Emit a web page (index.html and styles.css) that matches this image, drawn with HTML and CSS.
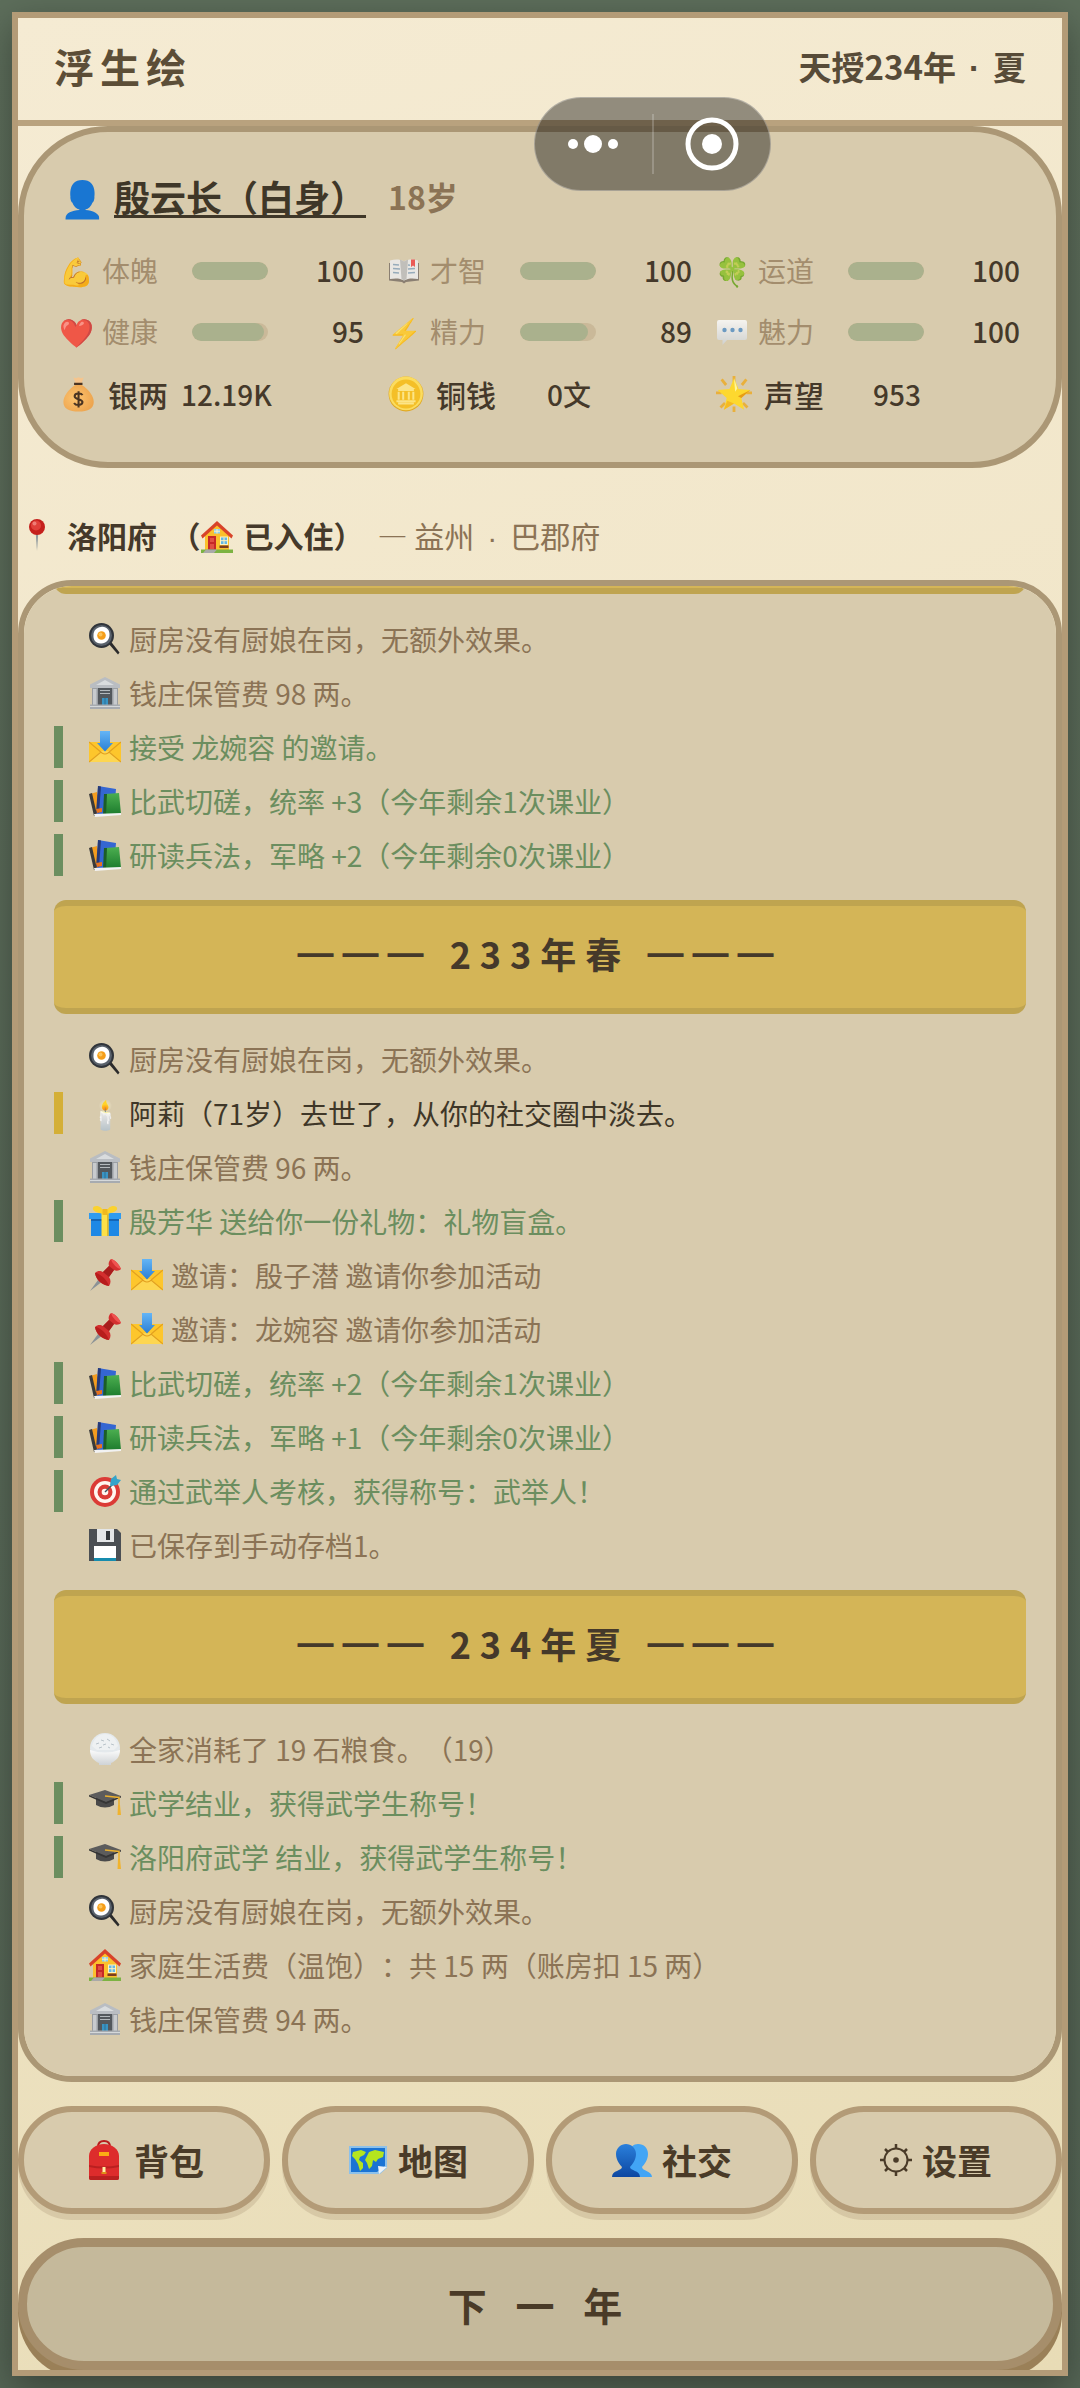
FILE: index.html
```html
<!DOCTYPE html>
<html lang="zh-CN">
<head>
    <meta charset="UTF-8">
    <meta name="viewport" content="width=device-width, initial-scale=1.0">
    <title>浮生绘</title>
    <link rel="stylesheet" href="styles.css">
</head>
<body>
    <!-- shared icons -->
    <svg class="sprite" aria-hidden="true">
        <defs>
            <linearGradient id="gBlue" x1="0" y1="0" x2="0" y2="1"><stop offset="0" stop-color="#2a80dc"/><stop offset="1" stop-color="#0d47a1"/></linearGradient>
            <linearGradient id="gSky" x1="0" y1="0" x2="0" y2="1"><stop offset="0" stop-color="#64b5f6"/><stop offset="1" stop-color="#2a7fd4"/></linearGradient>
            <linearGradient id="gWhite" x1="0" y1="0" x2="0" y2="1"><stop offset="0" stop-color="#fbfbfb"/><stop offset="1" stop-color="#cfd3d6"/></linearGradient>
            <linearGradient id="gGreen" x1="0" y1="0" x2="0" y2="1"><stop offset="0" stop-color="#4caf50"/><stop offset="1" stop-color="#1b7a2c"/></linearGradient>
            <radialGradient id="gMoney" cx=".4" cy=".5" r=".6"><stop offset="0" stop-color="#fdc470"/><stop offset="1" stop-color="#eda54f"/></radialGradient>
        </defs>
        <symbol id="book" viewBox="0 0 32 32">
            <path d="M1 8v17.500l13 1.500 2 1.500 2-1.500 13-1.500V8z" fill="#7d7268"/>
            <path d="M2 5.500C7 4 12 4 16 6.500 20 4 25 4 30 5.500V24c-5-1-10-1-14 1.500C12 23 7 23 2 24z" fill="#ededed"/>
            <path d="M16 6.500c-2-1.300-3-1.500-4-1.800L13.500 24l2.500 1.500L18.500 24 20 4.700c-1 .3-2 .5-4 1.800z" fill="#bdbdbd"/>
            <path d="M23 4.500h4V12l-2-1.500L23 12z" fill="#ef4848"/>
            <path d="M5 9.500l6 .5M5 13.500l7 .5M5 17.500l6 .5M20 10l2 .2M20 14l7-.5M20 18l7-.5" stroke="#8ba6bd" stroke-width="1.500"/>
        </symbol>
        <symbol id="chat" viewBox="0 0 32 32">
            <path d="M3 4h26q2 0 2 2v16q0 2-2 2H11l-4.500 5V24H3q-2 0-2-2V6q0-2 2-2z" fill="url(#gWhite)"/>
            <circle cx="8.500" cy="14" r="2.200" fill="#5a92c6"/><circle cx="16.500" cy="14" r="2.200" fill="#5a92c6"/><circle cx="24.500" cy="14" r="2.200" fill="#5a92c6"/>
        </symbol>
        <symbol id="money" viewBox="0 0 32 32">
            <path d="M12 1l2 1 2.500-1 2.500 1 2-1-2 6h-5z" fill="#f6c58d"/>
            <path d="M13.500 8h6c6 4 10.500 10 10.500 15 0 6-5 8.500-13.500 8.500S3 29 3 23c0-5 4.500-11 10.500-15z" fill="url(#gMoney)"/>
            <path d="M12.500 7h7.500" stroke="#4a3422" stroke-width="2"/>
            <path d="M20 17c-1-2-7-2.200-7 1 0 3.200 7 2 7 5.200 0 3.300-6 3.300-7.500.8M16.500 13.500v14.500" fill="none" stroke="#4a3422" stroke-width="1.800"/>
        </symbol>
        <symbol id="coin" viewBox="0 0 32 32">
            <circle cx="16" cy="16" r="15.500" fill="#e0a820"/><circle cx="16" cy="15.500" r="15" fill="#fbdc5f"/><circle cx="16" cy="16" r="12.800" fill="#f4bf27"/>
            <path d="M16 6.500l8.500 5h-17z" fill="#fce588"/>
            <path d="M9 12.500h14M9.500 14v7M13.500 14v7M18.500 14v7M22.500 14v7M7.500 22.500h17M9 24.500h14" stroke="#fce588" stroke-width="1.800"/>
        </symbol>
        <symbol id="star" viewBox="0 0 32 32">
            <path d="M16 0v5M16 27v5M0 15h5M27 15h5M5 3l4 5M27 3l-4 5M4 28l4-4M28 28l-4-4" stroke="#e9b03c" stroke-width="2.500"/>
            <path d="M16 2l4 9.500 10.500 1-8 7 2.500 10.500-9-5.500L7 30l2.500-10.500-8-7 10.500-1z" fill="#fdd82f"/>
            <path d="M16 2l3 9-2 3z" fill="#fff59a"/><path d="M30.500 12.500l-8 7-3-1.500z" fill="#e79c16"/><path d="M16 24.500L7 30l3-8z" fill="#f5b921"/>
        </symbol>
        <symbol id="pin" viewBox="0 0 32 32">
            <path d="M14.700 14h2.600L16 32z" fill="#8f999d"/><circle cx="16" cy="8" r="8" fill="#c5201c"/><circle cx="15" cy="6.500" r="5" fill="#e0403a"/><circle cx="13.500" cy="4.500" r="2" fill="#ef7d76"/>
        </symbol>
        <symbol id="house" viewBox="0 0 32 32">
            <path d="M4 14L16 3l12 11v15H4z" fill="#fbc02d"/>
            <path d="M16 0L0 14.500l1.500 3L16 4.500l14.500 13 1.500-3z" fill="#d8432a"/>
            <path d="M7 15h8v15H7z" fill="#c62828"/><path d="M9 17h4v4H9zM9 23h4v5H9z" fill="#e04f43"/>
            <path d="M19 15.500h8V24h-8z" fill="#fff3c0"/><path d="M20 16.500h6V23h-6z" fill="#62b8e8"/><path d="M23 16.500V23M20 19.700h6" stroke="#fff3c0"/>
            <path d="M13 8h6v4.500h-6z" fill="#8bd0f2"/><path d="M16 8v4.500M13 10.200h6" stroke="#fff3c0"/>
            <path d="M18.500 24.500h9V27h-9z" fill="#7b3b1e"/><path d="M0 28.500h32V32H0z" fill="#7cb342"/><path d="M5 28.500h11L13 32H2z" fill="#a9a9a9"/>
        </symbol>
        <symbol id="pan" viewBox="0 0 32 32">
            <path d="M19 20l2.500-2 9 11.500-1.500 2z" fill="#2b2b2b"/>
            <circle cx="12.500" cy="12.500" r="12.500" fill="#30343a"/><circle cx="12.500" cy="12.500" r="10.500" fill="#59616b"/>
            <path d="M12 4c5-1 9 3 8.500 8 0 5-3.500 8-8 8.500C7 21 4 17 4.500 12 4.500 8 7 4.500 12 4z" fill="#fff"/><circle cx="12.500" cy="12.500" r="4.300" fill="#f59e19"/><circle cx="11.500" cy="11.500" r="2" fill="#fbc35a"/>
        </symbol>
        <symbol id="bank" viewBox="0 0 32 32">
            <path d="M16 0l15 7.500V11H1V7.500z" fill="#b9bdc2"/><path d="M16 3l9 5H7z" fill="#d9dcde"/>
            <path d="M3 11h26v17H3z" fill="#9b9fa4"/><path d="M4 12h3.500v16H4zM24.500 12H28v16h-3.500z" fill="#c8cbce"/>
            <path d="M9 11h14v17H9z" fill="#53585d"/><path d="M11 13.500h10M11 16.500h10" stroke="#b4b9bd" stroke-width="1.200"/>
            <path d="M13 21h6v7h-6z" fill="#3a94c4"/><path d="M16 21v7" stroke="#2d6f95"/>
            <path d="M1 27.500h30V32H1z" fill="#a7abb0"/><path d="M1 29.500h30" stroke="#d5d8da"/>
        </symbol>
        <symbol id="mail" viewBox="0 0 32 32">
            <path d="M0 11h32v20H0z" fill="#fdc62c"/><path d="M0 31l12-11h8l12 11z" fill="#fdd651"/><path d="M0 11l13 11q3 2 6 0l13-11M0 31l12-10M32 31L20 21" fill="none" stroke="#e2a01f" stroke-width="1.200"/>
            <path d="M11 0h10v12h3L16 20.500 8 12h3z" fill="url(#gSky)"/>
        </symbol>
        <symbol id="books" viewBox="0 0 32 32">
            <path d="M1 9l7-2 5 22-6 2z" fill="#f39c1f"/><path d="M0 9l3-1 5 22-3 1z" fill="#3a3a3a"/>
            <path d="M9 1l18 3-2 25H8z" fill="#3466d2"/><path d="M9 1l3 .5L10 28H7z" fill="#263a78"/>
            <path d="M16 9l14-1 2 21-16 1z" fill="url(#gGreen)"/><path d="M15 9h3l-1 21h-3z" fill="#1c5e28"/>
            <path d="M5 29l27-1v2l-26 2z" fill="#f2f2f2"/><path d="M7 24l6-1v4l-5 1z" fill="#e9731c"/>
        </symbol>
        <symbol id="gift" viewBox="0 0 32 32">
            <path d="M2 10h28v21H2z" fill="#1e88e5"/><path d="M0 8h32v6H0z" fill="#2f9bf0"/><path d="M2 14h28v2H2z" fill="#1565b5"/>
            <path d="M12.500 8h7v23h-7z" fill="#fde047"/><path d="M18 8h1.500v23H18z" fill="#e0b82a"/>
            <path d="M15 7C12 0 5 0 4 3s4 5 11 6M17 7c3-7 10-7 11-4s-4 5-11 6" fill="#fbd22f"/><path d="M13.500 4h5v6h-5z" fill="#f0b91e"/>
        </symbol>
        <symbol id="pushpin" viewBox="0 0 32 32">
            <path d="M9 21l3 2.500L1 32z" fill="#8b9296"/>
            <path d="M6 14c3-3 6-2 8-1l6-6c-1-3 0-5 2-7 4 1 8 5 10 10-2 2-5 2-7 1l-5 7c2 3 2 6 0 9C13 26 7 21 6 14z" fill="#d32f2f"/>
            <path d="M14 13l6-6 5 4-5 7z" fill="#a81d1d"/><path d="M22 0c4 1 8 5 10 10-3 0-9-5-10-10z" fill="#ef5350"/><path d="M6 14c3-1 12 6 14 13-7-1-13-6-14-13z" fill="#b71c1c"/>
        </symbol>
        <symbol id="target" viewBox="0 0 32 32">
            <circle cx="16" cy="17" r="15" fill="#db3b36"/><circle cx="16" cy="17" r="11" fill="#fff6f0"/><circle cx="16" cy="17" r="7.500" fill="#db3b36"/><circle cx="16" cy="17" r="3.300" fill="#fff6f0"/>
            <path d="M16 17L27 6" stroke="#3c5661" stroke-width="1.500"/><path d="M21 10l1-6 5-4 1 4 4 1-4 5-6 1z" fill="#35a3c9"/>
        </symbol>
        <symbol id="disk" viewBox="0 0 32 32">
            <path d="M0 0h28l4 4v28H0z" fill="#4b4f54"/><path d="M8 0h17v13H8z" fill="#e4e6e8"/><path d="M17 2h4v9h-4z" fill="#33373b"/>
            <path d="M5 17h22v15H5z" fill="#fff"/><path d="M5 29h22v3H5z" fill="#168cae"/>
        </symbol>
        <symbol id="rice" viewBox="0 0 32 32">
            <circle cx="16" cy="15" r="15" fill="#e4e9ec"/><path d="M3 13C5 5 10 1 16 1s11 4 13 12l-4 4H8z" fill="#eef1f2"/>
            <path d="M7 11l3-1M12 7l3 1M18 6l3 2M22 11l3 1M14 12l3-1M10 15l3-1M19 14l2 1" stroke="#b9c3c9"/>
            <path d="M1 17q15 5 30 0c0 7-4 11-9 13v2H10v-2C5 28 1 24 1 17z" fill="url(#gWhite)"/>
        </symbol>
        <symbol id="cap" viewBox="0 0 32 32">
            <path d="M7 10v8q9 5 18 0v-8z" fill="#4a4a4a"/><path d="M0 8l16-5 16 6-15 6z" fill="#5c5c5c"/><path d="M0 8l17 7 15-6v1.500L17 17 0 9.500z" fill="#353535"/>
            <path d="M16 9l14 1.500V22" fill="none" stroke="#eab02e" stroke-width="1.600"/><path d="M29 18h2l1 10h-3.500z" fill="#f0b32e"/>
        </symbol>
        <symbol id="bag" viewBox="0 0 40 40">
            <path d="M14 7q0-6 6-6t6 6" fill="none" stroke="#b71c1c" stroke-width="2"/>
            <path d="M5 16C5 9 12 4 20 4s15 5 15 12v22q0 2-2 2H7q-2 0-2-2z" fill="#dd2c2c"/>
            <path d="M5 25q15 3 30 0v2q-15 3-30 0zM5 36h30v2q0 2-2 2H7q-2 0-2-2z" fill="#b92020"/>
            <path d="M15 12h10v4H15z" fill="#fbab14"/><path d="M18.500 27h3v6h-3z" fill="#fff0a3"/><path d="M17.500 32h5v2h-5z" fill="#e08f18"/>
        </symbol>
        <symbol id="map" viewBox="0 0 40 40">
            <path d="M1 6h38v22l-7 6H1z" fill="#8dc1ea"/><path d="M3 8h34v18l-8 6H3z" fill="#1b74d4"/>
            <path d="M5 12l8-2 5 2-2 3-4 2-1 3 4 3v5l-3 3-2-7-3-5-3-3zM21 12l6-2 9 2-1 5-5 2-2 3-3-2-1 6-3 3-2-6-2-3z" fill="#b4e51e"/>
            <path d="M39 27l-9-1 1 8z" fill="#edf3f8"/>
        </symbol>
        <symbol id="people" viewBox="0 0 40 40">
            <path d="M17 15c0-8 5-11 9-11 6 0 10 4 10 10s-4 11-6 13c0 4 10 4 10 10H14z" fill="#42a5f5"/>
            <path d="M4 14C4 8 9 4 14 4s10 4 10 10-4 11-6 13c0 4 10 3 10 10H0c0-7 10-6 10-10-2-2-6-7-6-13z" fill="url(#gBlue)"/>
        </symbol>
        <symbol id="gear" viewBox="0 0 32 32">
            <circle cx="16" cy="16" r="11.500" fill="none" stroke="currentColor" stroke-width="2"/><circle cx="16" cy="16" r="2.800" fill="currentColor"/>
            <path d="M16 0v5M16 27v5M0 16h5M27 16h5M5 5l3 3M24 24l3 3M27 5l-3 3M8 24l-3 3" stroke="currentColor" stroke-width="2.500"/>
        </symbol>
    </svg>

    <div class="frame">
        <header class="top-bar">
            <h1 class="title">浮生绘</h1>
            <span class="date">天授234年<span class="dot">·</span>夏</span>
        </header>

        <section class="profile">
            <div class="name-row">
                <span class="avatar">👤</span>
                <a class="name" href="#">殷云长（白身）</a>
                <span class="age">18岁</span>
            </div>
            <div class="stats">
                <div class="stat"><span class="emoji">💪</span><span class="label">体魄</span><div class="bar"><div class="fill" style="width: 100%"></div></div><span class="value">100</span></div>
                <div class="stat"><svg class="icon"><use href="#book"/></svg><span class="label">才智</span><div class="bar"><div class="fill" style="width: 100%"></div></div><span class="value">100</span></div>
                <div class="stat"><span class="emoji">🍀</span><span class="label">运道</span><div class="bar"><div class="fill" style="width: 100%"></div></div><span class="value">100</span></div>
                <div class="stat"><span class="emoji">❤️</span><span class="label">健康</span><div class="bar"><div class="fill" style="width: 95%"></div></div><span class="value">95</span></div>
                <div class="stat"><span class="emoji">⚡</span><span class="label">精力</span><div class="bar"><div class="fill" style="width: 89%"></div></div><span class="value">89</span></div>
                <div class="stat"><svg class="icon"><use href="#chat"/></svg><span class="label">魅力</span><div class="bar"><div class="fill" style="width: 100%"></div></div><span class="value">100</span></div>
                <div class="money"><svg class="icon"><use href="#money"/></svg><span>银两</span><span class="amount long">12.19K</span></div>
                <div class="money"><svg class="icon"><use href="#coin"/></svg><span>铜钱</span><span class="amount">0文</span></div>
                <div class="money"><svg class="icon"><use href="#star"/></svg><span>声望</span><span class="amount">953</span></div>
            </div>
        </section>

        <div class="location">
            <svg class="icon"><use href="#pin"/></svg>
            <span class="place">洛阳府&nbsp; （<svg class="icon"><use href="#house"/></svg> 已入住）</span>
            <span class="region">— 益州<span class="dot">·</span>巴郡府</span>
        </div>

        <main class="log">
            <div class="entries">
                <div class="season"></div>
                <p class="entry"><svg class="icon"><use href="#pan"/></svg>厨房没有厨娘在岗，无额外效果。</p>
                <p class="entry"><svg class="icon"><use href="#bank"/></svg>钱庄保管费 98 两。</p>
                <p class="entry good"><svg class="icon"><use href="#mail"/></svg>接受 龙婉容 的邀请。</p>
                <p class="entry good"><svg class="icon"><use href="#books"/></svg>比武切磋，统率 +3（今年剩余1次课业）</p>
                <p class="entry good"><svg class="icon"><use href="#books"/></svg>研读兵法，军略 +2（今年剩余0次课业）</p>

                <h2 class="season"><span class="dash">———</span> 233年春 <span class="dash">———</span></h2>
                <p class="entry"><svg class="icon"><use href="#pan"/></svg>厨房没有厨娘在岗，无额外效果。</p>
                <p class="entry event"><span class="emoji">🕯️</span>阿莉（71岁）去世了，从你的社交圈中淡去。</p>
                <p class="entry"><svg class="icon"><use href="#bank"/></svg>钱庄保管费 96 两。</p>
                <p class="entry good"><svg class="icon"><use href="#gift"/></svg>殷芳华 送给你一份礼物：礼物盲盒。</p>
                <p class="entry"><svg class="icon"><use href="#pushpin"/></svg><svg class="icon"><use href="#mail"/></svg>邀请：殷子潜 邀请你参加活动</p>
                <p class="entry"><svg class="icon"><use href="#pushpin"/></svg><svg class="icon"><use href="#mail"/></svg>邀请：龙婉容 邀请你参加活动</p>
                <p class="entry good"><svg class="icon"><use href="#books"/></svg>比武切磋，统率 +2（今年剩余1次课业）</p>
                <p class="entry good"><svg class="icon"><use href="#books"/></svg>研读兵法，军略 +1（今年剩余0次课业）</p>
                <p class="entry good"><svg class="icon"><use href="#target"/></svg>通过武举人考核，获得称号：武举人！</p>
                <p class="entry"><svg class="icon"><use href="#disk"/></svg>已保存到手动存档1。</p>

                <h2 class="season"><span class="dash">———</span> 234年夏 <span class="dash">———</span></h2>
                <p class="entry"><svg class="icon"><use href="#rice"/></svg>全家消耗了 19 石粮食。（19）</p>
                <p class="entry good"><svg class="icon"><use href="#cap"/></svg>武学结业，获得武学生称号！</p>
                <p class="entry good"><svg class="icon"><use href="#cap"/></svg>洛阳府武学 结业，获得武学生称号！</p>
                <p class="entry"><svg class="icon"><use href="#pan"/></svg>厨房没有厨娘在岗，无额外效果。</p>
                <p class="entry"><svg class="icon"><use href="#house"/></svg>家庭生活费（温饱）：共 15 两（账房扣 15 两）</p>
                <p class="entry"><svg class="icon"><use href="#bank"/></svg>钱庄保管费 94 两。</p>
            </div>
        </main>

        <nav class="menu">
            <button class="menu-btn"><svg class="icon"><use href="#bag"/></svg>背包</button>
            <button class="menu-btn"><svg class="icon"><use href="#map"/></svg>地图</button>
            <button class="menu-btn"><svg class="icon"><use href="#people"/></svg>社交</button>
            <button class="menu-btn"><svg class="icon gear"><use href="#gear"/></svg>设置</button>
        </nav>
        <button class="next-btn">下 一 年</button>
    </div>

    <!-- floating mini program control -->
    <div class="capsule">
        <button class="capsule-btn" aria-label="更多">
            <svg width="54" height="54" viewBox="0 0 54 54"><circle cx="7" cy="27" r="5"/><circle cx="27" cy="27" r="9"/><circle cx="47" cy="27" r="5"/></svg>
        </button>
        <button class="capsule-btn" aria-label="关闭">
            <svg width="54" height="54" viewBox="0 0 54 54"><circle cx="27" cy="27" r="24" fill="none" stroke="#fff" stroke-width="5"/><circle cx="27" cy="27" r="10"/></svg>
        </button>
    </div>
</body>
</html>
```
FILE: styles.css
```css
* {
    box-sizing: border-box;
}
body {
    display: flex;
    height: 100vh;
    margin: 0;
    padding: 12px;
    background: linear-gradient(#5d6e5b, #566656);
    font-family: "Noto Sans CJK SC", sans-serif;
    color: #45392a;
    text-spacing-trim: space-all;
}
h1, h2, p {
    margin: 0;
}
button {
    font-family: inherit;
    color: #4a3b28;
    cursor: pointer;
}
.sprite {
    position: absolute;
    width: 0;
    height: 0;
}
.icon {
    flex: none;
    width: 32px;
    height: 32px;
    overflow: visible;
}
.emoji {
    flex: none;
    display: flex;
    justify-content: center;
    width: 32px;
    font-size: 28px;
}
.dot {
    margin: 0 13px;
    font-family: "Liberation Sans", sans-serif;
    line-height: 0;
}
.frame {
    flex: 1;
    display: flex;
    flex-direction: column;
    min-width: 0;
    border: 6px solid #b39b77;
    background: linear-gradient(160deg, #f5ebd3, #f1e6c9 40%, #e8dcb6);
    box-shadow: 0 12px 36px rgba(0, 0, 0, .35);
    overflow: hidden;
}

/* header */
.top-bar {
    flex: none;
    display: flex;
    align-items: center;
    justify-content: space-between;
    padding: 18px 36px 24px;
    border-bottom: 6px solid #b9a27e;
    line-height: 60px;
}
.title {
    font-size: 40px;
    letter-spacing: 6px;
    color: #5c4e37;
}
.date {
    font-size: 33px;
    font-weight: 700;
    color: #574b38;
}

/* character */
.profile {
    flex: none;
    padding: 32px 36px 44px;
    border: 6px solid #ab9775;
    border-radius: 90px;
    background: #d8cbad;
}
.name-row {
    display: flex;
    align-items: center;
    margin-bottom: 20px;
    font-size: 36px;
    font-weight: 700;
    line-height: 64px;
}
.avatar {
    width: 54px;
}
.name {
    margin-right: 22px;
    color: #3f3728;
    text-underline-offset: 3px;
    text-decoration-thickness: 3px;
    text-decoration-skip-ink: none;
}
.age {
    font-size: 32px;
    color: #8b7355;
}
.stats {
    display: grid;
    grid-template-columns: repeat(3, 1fr);
    gap: 16px 24px;
}
.stat {
    display: grid;
    grid-template-columns: 42px 90px 76px 1fr;
    align-items: center;
    line-height: 45px;
}
.stat .icon, .stat .emoji {
    opacity: .85;
}
.label {
    font-size: 28px;
    color: #a38d6d;
}
.bar {
    height: 18px;
    border-radius: 9px;
    background: #cab999;
    overflow: hidden;
}
.fill {
    height: 100%;
    border-radius: 9px;
    background: #aab18d;
}
.value {
    font-size: 28px;
    font-weight: 500;
    text-align: right;
}
.money {
    display: grid;
    grid-template-columns: 48px 73px 120px;
    align-items: center;
    font-size: 30px;
    font-weight: 500;
    line-height: 48px;
}
.money .icon {
    width: 36px;
    height: 36px;
}
.amount {
    font-size: 28px;
    text-align: center;
}
.amount.long {
    text-align: left;
}

/* location */
.location {
    flex: none;
    display: flex;
    align-items: center;
    padding: 40px 3px 18px;
    font-size: 30px;
    line-height: 54px;
}
.place {
    margin: 0 14px 0 14px;
    font-weight: 700;
}
.place .icon {
    margin-right: 4px;
    vertical-align: -5px;
}
.region {
    color: #8b7355;
}

/* event log, stays at the newest entry */
.log {
    flex: 1;
    display: flex;
    flex-direction: column-reverse;
    min-height: 0;
    padding: 0 30px 36px;
    border: 6px solid #ab9775;
    border-radius: 54px;
    background: #d8cbad;
    overflow-y: auto;
    scrollbar-width: none;
}
.entries {
    display: flex;
    flex-direction: column;
    gap: 12px;
}
.entry {
    display: flex;
    align-items: center;
    padding-left: 24px;
    border-left: 9px solid transparent;
    font-size: 28px;
    line-height: 42px;
    color: #8b7355;
    white-space: pre-wrap;
}
.entry .icon, .entry .emoji {
    margin: 0 8px 0 2px;
}
.good {
    border-color: #6b8e5f;
    color: #6b8e5f;
}
.event {
    border-color: #d4af37;
    color: #3f3728;
}
.season {
    margin: 12px 0;
    padding: 20px 24px 28px;
    border: solid #bfa450;
    border-width: 6px 0;
    border-radius: 12px;
    background: #d4b557;
    font-size: 36px;
    line-height: 54px;
    letter-spacing: 9px;
    text-align: center;
    color: #45392a;
}
.dash {
    font-family: "Liberation Sans", sans-serif;
    line-height: 0;
    vertical-align: 4px;
}

/* buttons */
.menu {
    flex: none;
    display: grid;
    grid-template-columns: repeat(4, 1fr);
    gap: 12px;
    margin: 24px 0;
}
.menu-btn {
    display: flex;
    align-items: center;
    justify-content: center;
    gap: 10px;
    padding: 23px 0;
    border: 6px solid #b39b77;
    border-radius: 54px;
    background: #d8cbad;
    box-shadow: 0 6px 0 rgba(139, 115, 85, .2);
    font-size: 35px;
    font-weight: 700;
    line-height: 50px;
}
.menu-btn .icon {
    width: 40px;
    height: 40px;
}
.menu-btn .gear {
    width: 32px;
    height: 32px;
}
.next-btn {
    flex: none;
    padding: 27px 0;
    border: 9px solid #a68e6b;
    border-radius: 66px;
    background: #c5b99b;
    box-shadow: 0 9px 0 #9a8058;
    font-size: 39px;
    font-weight: 700;
    line-height: 60px;
    letter-spacing: 10px;
}

/* overlay */
.capsule {
    position: absolute;
    top: 97px;
    right: 309px;
    display: flex;
    align-items: center;
    width: 237px;
    height: 94px;
    border: 1px solid rgba(255, 255, 255, .3);
    border-radius: 47px;
    background: rgba(0, 0, 0, .4);
}
.capsule-btn {
    flex: 1;
    display: flex;
    align-items: center;
    justify-content: center;
    height: 60px;
    padding: 0;
    border: none;
    background: none;
    fill: #fff;
}
.capsule-btn + .capsule-btn {
    border-left: 2px solid rgba(255, 255, 255, .2);
}
```
